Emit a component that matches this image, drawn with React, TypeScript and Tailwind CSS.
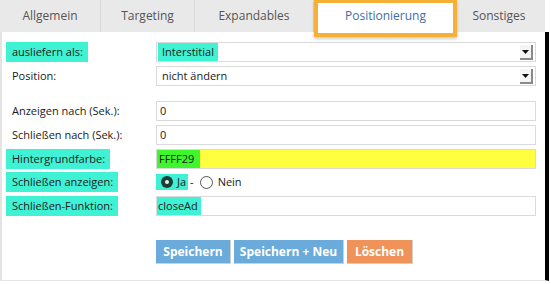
import React from "react";

const tabs = [
  { label: "Allgemein", w: "w-[101px]" },
  { label: "Targeting", w: "w-[94px]" },
  { label: "Expandables", w: "w-[119px]" },
];

const Caret = () => (
  <span className="absolute right-[2px] top-[2px] flex h-[15px] w-[13px] items-center justify-center border-r-2 border-b-2 border-[#8a8a8a] bg-[#f4f4f4]">
    <svg width="7" height="4" viewBox="0 0 7 4">
      <path d="M0 0h7L3.5 4z" fill="#111" />
    </svg>
  </span>
);

const Label = ({ text, mark }: { text: string; mark?: boolean }) => (
  <div className="flex w-[150px] shrink-0 items-center">
    <span className={mark ? "bg-[#40f2d4] py-[2px] pl-[6px] pr-[5px]" : "pl-[6px]"}>{text}</span>
  </div>
);

const Field = ({ children, extra }: { children?: React.ReactNode; extra?: string }) => (
  <div className={`relative flex h-[20px] w-[380px] items-center border border-[#dadada] ${extra ?? "bg-white"}`}>
    {children}
  </div>
);

export default function App() {
  return (
    <div
      className="relative h-[284px] w-[551px] overflow-hidden bg-white text-[11px] text-[#1a1a1a]"
      style={{ fontFamily: '"Open Sans", "Liberation Sans", sans-serif' }}
    >
      {/* tab bar */}
      <div className="flex h-[32px] w-[545px] bg-[#e9e9e9] text-[12px] text-[#555]">
        {tabs.map((t) => (
          <div key={t.label} className={`${t.w} flex items-center justify-center border-r border-[#d9d9d9]`}>
            {t.label}
          </div>
        ))}
        <div className="relative z-10 flex h-[37px] w-[143px] items-center justify-center border-4 border-t-[3px] border-[#f6b035] bg-white pb-[4px] text-[#3e6ea8] shadow-[0_2px_3px_rgba(0,0,0,0.2)]">
          Positionierung
        </div>
        <div className="flex flex-1 items-center justify-center pr-[4px]">Sonstiges</div>
      </div>

      {/* body */}
      <div className="flex h-[249px] w-[549px] flex-col border-r-[4px] border-b border-l-2 border-r-black border-b-[#e6e6e6] border-l-[#e3e3e3] pl-[4px]">
        <div className="mt-[10px] flex h-[20px]">
          <Label text="ausliefern als:" mark />
          <Field>
            <span className="ml-[1px] bg-[#40f2d4] px-[4px] py-[1px]">Interstitial</span>
            <Caret />
          </Field>
        </div>
        <div className="mt-[4px] flex h-[20px]">
          <Label text="Position:" />
          <Field>
            <span className="pl-[5px]">nicht ändern</span>
            <Caret />
          </Field>
        </div>
        <div className="mt-[15px] flex h-[20px]">
          <Label text="Anzeigen nach (Sek.):" />
          <Field>
            <span className="pl-[3px]">0</span>
          </Field>
        </div>
        <div className="mt-[4px] flex h-[20px]">
          <Label text="Schließen nach (Sek.):" />
          <Field>
            <span className="pl-[3px]">0</span>
          </Field>
        </div>
        <div className="mt-[4px] flex h-[20px]">
          <Label text="Hintergrundfarbe:" mark />
          <Field extra="bg-[#ffff40]">
            <span className="flex h-full items-center bg-[#3ff52c] pl-[2px] pr-[6px]">FFFF29</span>
          </Field>
        </div>
        <div className="mt-[5px] flex h-[16px]">
          <Label text="Schließen anzeigen:" mark />
          <div className="flex items-center">
            <span className="flex h-[16px] items-center bg-[#40f2d4] pl-[5px] pr-[2px]">
              <span className="flex h-[12px] w-[12px] items-center justify-center rounded-full bg-[#1f3d38]">
                <span className="h-[4px] w-[4px] rounded-full bg-[#cfe]" />
              </span>
              <span className="ml-[4px]">Ja</span>
            </span>
            <span className="ml-[2px]">-</span>
            <span className="ml-[6px] h-[13px] w-[13px] rounded-full border border-[#555] bg-white" />
            <span className="ml-[5px]">Nein</span>
          </div>
        </div>
        <div className="mt-[6px] flex h-[20px]">
          <Label text="Schließen-Funktion:" mark />
          <Field>
            <span className="flex h-full items-center bg-[#40f2d4] pl-[1px] pr-[3px]">closeAd</span>
          </Field>
        </div>
        <div className="mt-[24px] flex gap-[3px] pl-[150px] text-[12px] font-bold text-white">
          <button className="h-[24px] w-[75px] border-r border-b border-[#d0d0d0] bg-[#6aabdb]">Speichern</button>
          <button className="h-[24px] w-[110px] border-r border-b border-[#d0d0d0] bg-[#6aabdb]">Speichern + Neu</button>
          <button className="h-[24px] w-[66px] border-r border-b border-[#d0d0d0] bg-[#f0935b]">Löschen</button>
        </div>
      </div>
    </div>
  );
}
